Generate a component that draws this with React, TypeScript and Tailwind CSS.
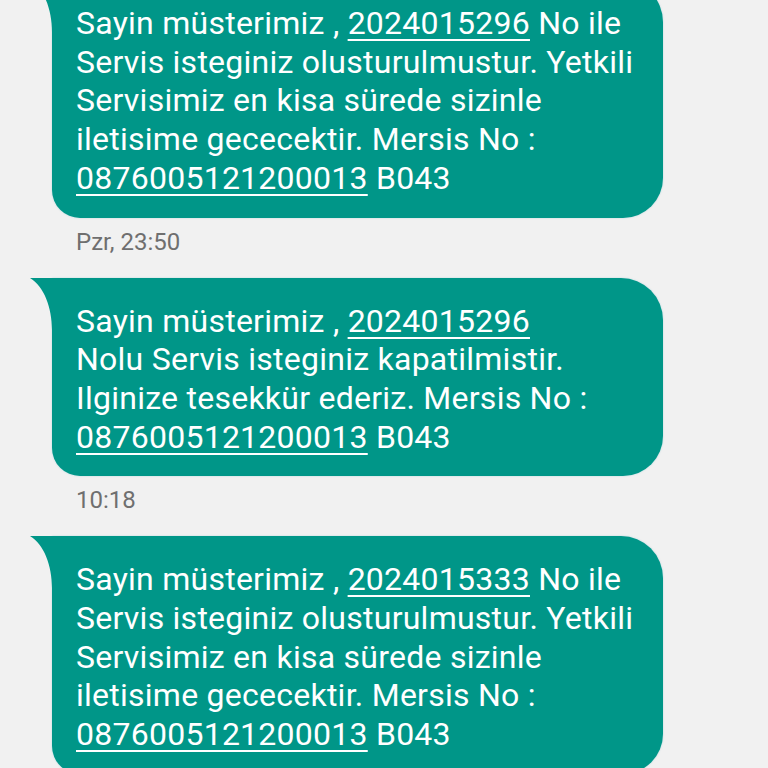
import React from "react";

const Tail = () => (
  <svg
    className="absolute left-[-22px] top-0"
    width="23"
    height="52"
    viewBox="0 0 23 52"
  >
    <path d="M0 0 L23 0 L23 52 L22 52 C22 30 14 8 0 0 Z" fill="#009688" />
  </svg>
);

const U = ({ children }: { children: React.ReactNode }) => (
  <span className="underline decoration-[1.5px] underline-offset-[5px]">{children}</span>
);

const Bubble = ({ lines, className = "" }: { lines: React.ReactNode[]; className?: string }) => (
  <div
    className={
      "relative ml-[52px] w-[611px] bg-[#009688] text-white rounded-tr-[42px] rounded-br-[40px] rounded-bl-[28px] pl-[24px] pt-[24px] pb-[20px] shadow-[0_0_2px_rgba(0,150,180,0.25)] " +
      className
    }
  >
    <Tail />
    {lines.map((l, i) => (
      <div key={i} className="whitespace-nowrap text-[32px] leading-[38.7px] tracking-[0.25px]">
        {l}
      </div>
    ))}
  </div>
);

const Stamp = ({ t }: { t: string }) => (
  <div className="pl-[76px] h-[60px] flex items-center pb-[12px] text-[24px] text-[#6f6f6f]">{t}</div>
);

export default function App() {
  return (
    <div
      className="w-[768px] h-[768px] overflow-hidden bg-[#f1f1f1]"
      style={{ fontFamily: "Roboto, 'Noto Sans', sans-serif" }}
    >
      <div className="mt-[-20px]">
        <Bubble
          lines={[
            <>Sayin müsterimiz , <U>2024015296</U> No ile</>,
            <>Servis isteginiz olusturulmustur. Yetkili</>,
            <>Servisimiz en kisa sürede sizinle</>,
            <>iletisime gececektir. Mersis No :</>,
            <><U>0876005121200013</U> B043</>,
          ]}
        />
        <Stamp t="Pzr, 23:50" />
        <Bubble
          lines={[
            <>Sayin müsterimiz , <U>2024015296</U></>,
            <>Nolu Servis isteginiz kapatilmistir.</>,
            <>Ilginize tesekkür ederiz. Mersis No :</>,
            <><U>0876005121200013</U> B043</>,
          ]}
        />
        <Stamp t="10:18" />
        <Bubble
          lines={[
            <>Sayin müsterimiz , <U>2024015333</U> No ile</>,
            <>Servis isteginiz olusturulmustur. Yetkili</>,
            <>Servisimiz en kisa sürede sizinle</>,
            <>iletisime gececektir. Mersis No :</>,
            <><U>0876005121200013</U> B043</>,
          ]}
        />
      </div>
    </div>
  );
}
